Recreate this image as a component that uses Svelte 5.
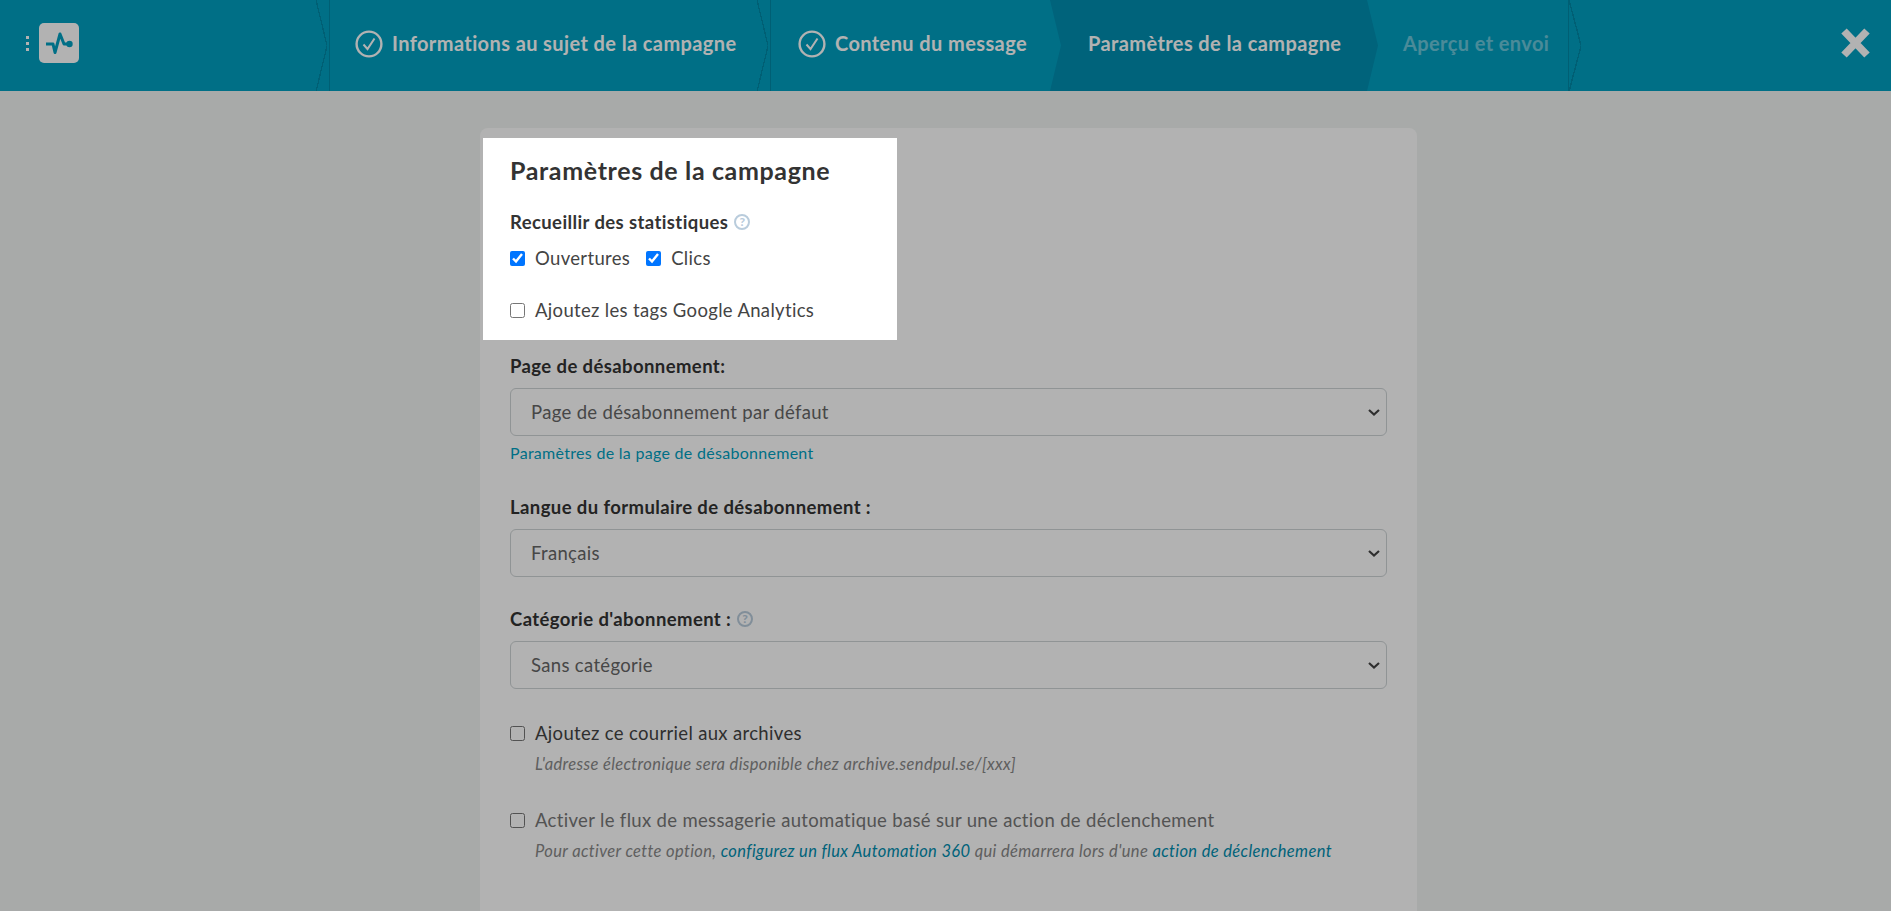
<script>
	const steps = [
		{ label: 'Informations au sujet de la campagne', state: 'done', cls: 'first' },
		{ label: 'Contenu du message', state: 'done', cls: 'second' },
		{ label: 'Paramètres de la campagne', state: 'active', cls: 'third' },
		{ label: 'Aperçu et envoi', state: 'todo', cls: 'fourth' }
	];
</script>

<div class="page">
	<header class="topbar">
		<div class="brand">
			<span class="dots"><i></i><i></i><i></i></span>
			<span class="logo">
				<svg width="28" height="24" viewBox="0 0 28 24" fill="none">
					<path d="M1 13h7l2 8.5L15 3l4 10h6" stroke="#009fc1" stroke-width="3" stroke-linejoin="round" />
					<circle cx="24.5" cy="13" r="3.2" fill="#009fc1" />
				</svg>
			</span>
		</div>
		<nav class="steps">
			{#each steps as step}
				<div class="step {step.cls} {step.state}">
					{#if step.state === 'done'}
						<svg class="tick" width="28" height="28" viewBox="0 0 28 28" fill="none">
							<circle cx="14" cy="14" r="12.4" stroke="#fff" stroke-width="2.4" />
							<path d="M8.5 14.5l4 4.5 7-10.5" stroke="#fff" stroke-width="2" />
						</svg>
					{/if}
					<span>{step.label}</span>
				</div>
			{/each}
		</nav>
		<svg class="close" width="30" height="30" viewBox="0 0 30 30">
			<path d="M4 3l23 24M27 3L4 27" stroke="#fff" stroke-width="7.5" />
		</svg>
	</header>

	<main class="card">
		<section class="spotlight">
			<h2>Paramètres de la campagne</h2>
			<div class="label">Recueillir des statistiques <span class="help">?</span></div>
			<div class="checks">
				<label class="check"><input type="checkbox" checked /> Ouvertures</label>
				<label class="check"><input type="checkbox" checked /> Clics</label>
			</div>
			<label class="check analytics"><input type="checkbox" /> Ajoutez les tags Google Analytics</label>
		</section>

		<div class="form">
			<div class="label">Page de désabonnement:</div>
			<select><option>Page de désabonnement par défaut</option></select>
			<a class="settings" href="#top">Paramètres de la page de désabonnement</a>

			<div class="label lang">Langue du formulaire de désabonnement :</div>
			<select><option>Français</option></select>

			<div class="label cat">Catégorie d'abonnement : <span class="help">?</span></div>
			<select><option>Sans catégorie</option></select>

			<label class="check archive"><input type="checkbox" /> Ajoutez ce courriel aux archives</label>
			<p class="hint">L'adresse électronique sera disponible chez archive.sendpul.se/[xxx]</p>

			<label class="check flow"><input type="checkbox" /> Activer le flux de messagerie automatique basé sur une action de déclenchement</label>
			<p class="hint second-hint">
				Pour activer cette option, <a href="#top">configurez un flux Automation 360</a> qui démarrera lors d'une <a href="#top">action de déclenchement</a>
			</p>
		</div>
	</main>
</div>

<style>
	:global(body) {
		margin: 0;
		font-family: 'Lato', 'Open Sans', sans-serif;
		color: #333;
		overflow: hidden;
	}

	.page {
		height: 911px;
		overflow: hidden;
		background: #f1f4f3;
	}

	/* Top bar */
	.topbar {
		height: 91px;
		background: #009fc1;
		display: flex;
		align-items: center;
		color: #fff;
	}

	.brand {
		width: 330px;
		flex-shrink: 0;
		display: flex;
		align-items: center;
		padding-left: 26px;
		margin-bottom: 5px;
		box-sizing: border-box;
		gap: 10px;
	}

	.dots {
		display: flex;
		flex-direction: column;
		gap: 3px;
	}

	.dots i {
		width: 3px;
		height: 3px;
		background: #fff;
	}

	.logo {
		width: 40px;
		height: 40px;
		background: #fff;
		border-radius: 5px;
		display: flex;
		align-items: center;
		justify-content: center;
	}

	.steps {
		display: flex;
		height: 100%;
		flex: 1;
		position: relative;
	}

	.step {
		height: 100%;
		display: flex;
		align-items: center;
		gap: 9px;
		box-sizing: border-box;
		padding-bottom: 3px;
		font-size: 20px;
		font-weight: 700;
		letter-spacing: 0.4px;
		white-space: nowrap;
		position: relative;
	}

	.step span {
		margin-top: -3px;
	}

	.step::before,
	.step::after {
		content: '';
		position: absolute;
		top: 0;
		bottom: 0;
		width: 11px;
		left: -14px;
		background: linear-gradient(to bottom right, transparent 47%, #0089a6 47%, #0089a6 53%, transparent 53%) bottom / 100% 50% no-repeat,
			linear-gradient(to top right, transparent 47%, #0089a6 47%, #0089a6 53%, transparent 53%) top / 100% 50% no-repeat;
	}

	.step::after {
		left: -1px;
		width: 1px;
		background: #0089a6;
	}

	.first {
		width: 441px;
		padding-left: 25px;
	}

	.second {
		width: 279px;
		padding-left: 27px;
	}

	.third {
		width: 328px;
		padding-left: 38px;
		background: #008eb0;
		clip-path: polygon(0 0, calc(100% - 11px) 0, 100% 50%, calc(100% - 11px) 100%, 0 100%, 11px 50%);
	}

	.third::before,
	.third::after {
		display: none;
	}

	.fourth {
		width: 203px;
		padding-left: 25px;
	}

	.fourth::before {
		left: auto;
		right: 0;
		width: 12px;
	}

	.fourth::after {
		left: auto;
		right: 12px;
	}

	.todo span {
		opacity: 0.42;
	}

	.close {
		margin: 0 21px 5px 0;
		flex-shrink: 0;
	}

	/* Card */
	.card {
		width: 937px;
		margin: 37px 0 0 480px;
		background: #fff;
		border-radius: 8px;
		padding-top: 10px;
		height: 900px;
	}

	.spotlight {
		position: relative;
		z-index: 2;
		width: 414px;
		margin-left: 3px;
		box-sizing: border-box;
		padding: 17px 27px 18px;
		background: #fff;
		box-shadow: 0 0 0 3000px rgba(0, 0, 0, 0.3);
	}

	h2 {
		margin: 0 0 25px;
		font-size: 25px;
		line-height: 30px;
		font-weight: 700;
		letter-spacing: 0.64px;
	}

	.label {
		font-size: 18.5px;
		font-weight: 700;
		letter-spacing: 0.4px;
		line-height: 24px;
		display: flex;
		align-items: center;
		white-space: pre-wrap;
	}

	.help {
		width: 16px;
		height: 16px;
		margin-left: 1px;
		box-sizing: border-box;
		border: 2px solid #b9ccdc;
		border-radius: 50%;
		color: #b9ccdc;
		font-size: 12px;
		font-weight: 900;
		letter-spacing: 0;
		line-height: 12px;
		text-align: center;
	}

	.checks {
		display: flex;
		gap: 16px;
		margin-top: 12px;
	}

	.check {
		display: flex;
		align-items: center;
		gap: 10px;
		font-size: 18.5px;
		letter-spacing: 0.33px;
		line-height: 24px;
		color: #444;
	}

	.check input {
		width: 15px;
		height: 15px;
		margin: 0;
	}

	.analytics {
		margin-top: 28px;
	}

	/* Rest of the form */
	.form {
		padding: 14px 30px 0;
	}

	.form .label {
		margin-bottom: 10px;
	}

	.form .lang {
		margin-top: 32px;
	}

	.form .cat {
		margin-top: 30px;
	}

	select {
		display: block;
		width: 100%;
		height: 48px;
		padding: 0 20px;
		border: 1px solid #ced4d6;
		border-radius: 6px;
		appearance: none;
		background: #fff url("data:image/svg+xml,%3Csvg xmlns='http://www.w3.org/2000/svg' width='12' height='7'%3E%3Cpath d='M1 1l5 4.5L11 1' fill='none' stroke='%23444' stroke-width='2.2'/%3E%3C/svg%3E") no-repeat right 6px center;
		color: #666;
		font-family: inherit;
		font-size: 18.5px;
		letter-spacing: 0.33px;
	}

	.settings {
		display: block;
		margin-top: 7px;
		font-size: 16px;
		letter-spacing: 0.29px;
		line-height: 20px;
		color: #009fc1;
		text-decoration: none;
	}

	.archive {
		margin-top: 32px;
	}

	.flow {
		margin-top: 34px;
		color: #777;
	}

	.hint {
		margin: 9px 0 0 25px;
		font-size: 16.5px;
		letter-spacing: 0.36px;
		line-height: 20px;
		font-style: italic;
		color: #888;
	}

	.hint a {
		color: #008eb0;
		text-decoration: none;
	}
</style>
